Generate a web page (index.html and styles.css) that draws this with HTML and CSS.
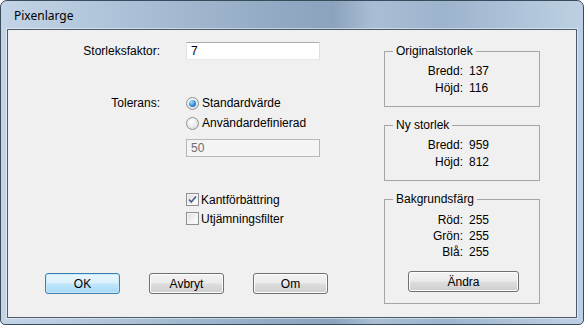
FILE: index.html
```html
<!DOCTYPE html>
<html lang="sv">
<head>
    <meta charset="UTF-8">
    <title>Pixenlarge</title>
    <link rel="stylesheet" href="styles.css">
</head>
<body>

<div class="window">
    <div class="titlebar">Pixenlarge</div>
    <div class="client">

        <div class="left">
            <div class="row row-size">
                <label class="lbl">Storleksfaktor:</label>
                <input type="text" class="field" value="7">
            </div>

            <div class="row row-tol">
                <label class="lbl lbl-tall">Tolerans:</label>
                <div class="options">
                    <div class="opt"><span class="radio checked"></span>Standardvärde</div>
                    <div class="opt"><span class="radio"></span>Användardefinierad</div>
                    <input type="text" class="field field-off" value="50" disabled>
                </div>
            </div>

            <div class="row row-checks">
                <div class="lbl"></div>
                <div class="options">
                    <div class="chk-row">
                        <span class="check">
                            <svg width="11" height="11" viewBox="0 0 11 11"><path d="M2 5.5 L4.3 8 L9 2.5" fill="none" stroke="#4b5e94" stroke-width="1.7"/></svg>
                        </span>Kantförbättring
                    </div>
                    <div class="chk-row"><span class="check"></span>Utjämningsfilter</div>
                </div>
            </div>

            <div class="buttons">
                <button class="btn btn-default">OK</button>
                <button class="btn">Avbryt</button>
                <button class="btn">Om</button>
            </div>
        </div>

        <div class="right">
            <div class="group">
                <span class="group-title">Originalstorlek</span>
                <div class="info">
                    <span class="k">Bredd:</span><span>137</span>
                    <span class="k">Höjd:</span><span>116</span>
                </div>
            </div>

            <div class="group">
                <span class="group-title">Ny storlek</span>
                <div class="info">
                    <span class="k">Bredd:</span><span>959</span>
                    <span class="k">Höjd:</span><span>812</span>
                </div>
            </div>

            <div class="group group-bg">
                <span class="group-title">Bakgrundsfärg</span>
                <div class="info info-tight">
                    <span class="k">Röd:</span><span>255</span>
                    <span class="k">Grön:</span><span>255</span>
                    <span class="k">Blå:</span><span>255</span>
                </div>
                <button class="btn btn-wide">Ändra</button>
            </div>
        </div>

    </div>
</div>

</body>
</html>
```

FILE: styles.css
```css
/* Dialogruta i Windows 7-stil */
body {
    margin: 0;
    background: #ffffff;
    font-family: "Liberation Sans", Arial, sans-serif;
    font-size: 12px;
    color: #000;
}

.window {
    width: 584px;
    height: 325px;
    box-sizing: border-box;
    border: 1px solid #3a4b5c;
    border-radius: 7px 7px 5px 5px;
    padding: 0 6px 6px 6px;
    background: linear-gradient(to right, #c3d4e6 0%, #b4c8dd 14%, #a3b9d0 30%, #91a9c2 48%, #8ba3bc 57%, #a9bed4 64%, #9db4cd 76%, #bdd0e3 100%);
    overflow: hidden;
}

.titlebar {
    height: 28px;
    line-height: 29px;
    padding-left: 7px;
    font-family: "Noto Sans", "Open Sans", sans-serif;
    font-size: 12px;
}

.client {
    display: flex;
    height: 289px;
    box-sizing: border-box;
    border: 1px solid #4c5b6b;
    background: #f0f0f0;
    box-shadow: 0 0 0 1px rgba(255, 255, 255, 0.45);
}

/* vänster del */
.left {
    width: 312px;
    flex: none;
    padding-left: 32px;
    box-sizing: border-box;
}

.row {
    display: flex;
}

.lbl {
    width: 120px;
    margin-right: 26px;
    flex: none;
    text-align: right;
    line-height: 18px;
}

.lbl-tall {
    line-height: 20px;
}

.row-size {
    margin-top: 12px;
}

.row-tol {
    margin-top: 33px;
}

.row-checks {
    margin-top: 33px;
}

.field {
    width: 134px;
    height: 18px;
    box-sizing: border-box;
    margin: 0;
    padding: 0 4px;
    border: 1px solid;
    border-color: #abadb3 #dbdfe6 #e3e9ef #e2e3ea;
    background: #fff;
    font-family: "Liberation Sans", Arial, sans-serif;
    font-size: 12px;
    color: #000;
    outline: none;
}

.field-off {
    margin-top: 6px;
    border-color: #b7b7b7;
    background: #f4f4f4;
    color: #6d6d6d;
}

.options {
    display: flex;
    flex-direction: column;
}

.opt {
    display: flex;
    align-items: center;
    height: 20px;
}

.radio {
    width: 13px;
    height: 13px;
    box-sizing: border-box;
    margin-right: 3px;
    border: 1px solid #8f9192;
    border-radius: 50%;
    background: radial-gradient(circle at 40% 35%, #ffffff 0%, #f0f0f0 40%, #cfd0d0 100%);
    display: flex;
    align-items: center;
    justify-content: center;
}

.radio.checked::after {
    content: "";
    width: 7px;
    height: 7px;
    border-radius: 50%;
    background: radial-gradient(circle at 35% 30%, #a6e3ff 0%, #3d9be0 45%, #14508f 100%);
}

.chk-row {
    display: flex;
    align-items: center;
    height: 19px;
}

.check {
    width: 13px;
    height: 13px;
    box-sizing: border-box;
    margin-right: 2px;
    border: 1px solid #8e8f8f;
    background: linear-gradient(135deg, #dcdcdc 0%, #f4f4f4 60%, #ffffff 100%);
    box-shadow: inset 0 0 0 1px #f4f4f4;
    display: flex;
    align-items: center;
    justify-content: center;
}

.check svg {
    display: block;
}

/* knappar */
.buttons {
    display: flex;
    gap: 29px;
    margin-top: 45px;
    margin-left: 5px;
}

.btn {
    flex: none;
    width: 75px;
    height: 21px;
    padding: 0;
    border: 1px solid #707070;
    border-radius: 3px;
    background: linear-gradient(#f2f2f2 0%, #ebebeb 48%, #dddddd 52%, #cfcfcf 100%);
    box-shadow: inset 0 0 0 1px #fcfcfc;
    font-family: "Liberation Sans", Arial, sans-serif;
    font-size: 12px;
    color: #000;
}

.btn-default {
    border-color: #3c7fb1;
    background: linear-gradient(#eaf6fd 0%, #d9f0fc 48%, #bee6fd 52%, #a7d9f5 100%);
    box-shadow: inset 0 0 0 1px #c6e9fb;
}

.btn-wide {
    display: block;
    width: 111px;
    margin: 11px 0 0 23px;
}

/* höger del */
.right {
    width: 156px;
    margin-left: 64px;
    padding-top: 21px;
}

.group {
    border: 1px solid #a5a5a5;
    padding-bottom: 9px;
    margin-bottom: 18px;
}

.group-bg {
    padding-bottom: 11px;
}

.group-title {
    display: block;
    width: max-content;
    margin: -8px 0 0 8px;
    padding: 0 3px;
    line-height: 14px;
    background: #f0f0f0;
}

.info {
    display: grid;
    grid-template-columns: 78px auto;
    column-gap: 6px;
    margin-top: 5px;
    line-height: 17px;
}

.info-tight {
    margin-top: 6px;
    line-height: 16px;
}

.info .k {
    text-align: right;
}
```
